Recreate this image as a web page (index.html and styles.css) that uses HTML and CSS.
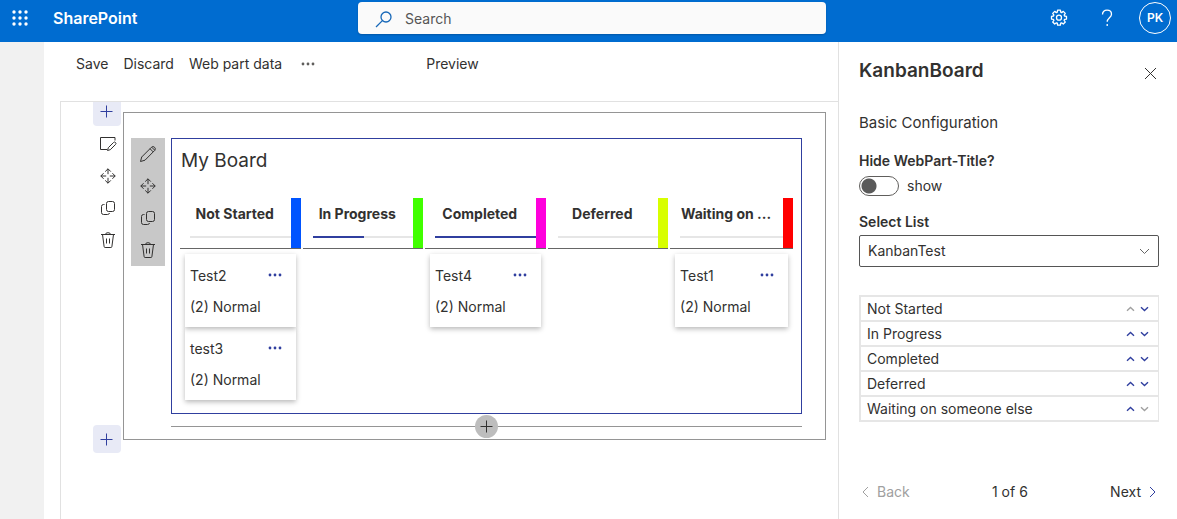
FILE: index.html
```html
<!DOCTYPE html>
<html lang="en">
<head>
<meta charset="utf-8">
<meta name="viewport" content="width=device-width, initial-scale=1">
<title>SharePoint - KanbanBoard</title>
<link rel="stylesheet" href="styles.css">
</head>
<body>
<svg class="sprite" aria-hidden="true">
  <symbol id="plus" viewBox="0 0 13 13"><path d="M6.500 .5v12M.5 6.500h12"/></symbol>
  <symbol id="move" viewBox="0 0 16 16"><path d="M8 .8v5.400M8 9.800v5.400M.8 8h5.400M9.800 8h5.400M5.200 3.600 8 .8l2.800 2.800M5.200 12.400 8 15.200l2.800-2.800M3.600 5.200.8 8l2.800 2.800M12.400 5.200 15.200 8l-2.800 2.800"/></symbol>
  <symbol id="copy" viewBox="0 0 16 16"><rect x="6.500" y="1.500" width="8" height="10" rx="2"/><path d="M4.500 4.500h-1a2 2 0 0 0-2 2v6a2 2 0 0 0 2 2h4a2 2 0 0 0 2-1.500"/></symbol>
  <symbol id="trash" viewBox="0 0 16 16"><path d="M1 2.500h14M5.500 2.500a2.500 1.800 0 0 1 5 0M2.500 2.500l1.600 12q.1 1 1 1h5.800q.9 0 1-1l1.600-12M6.500 6.500v5M9.500 6.500v5"/></symbol>
  <symbol id="pencil" viewBox="0 0 18 18"><path d="M1.500 16.500 2.700 12 12.400 2.300a2.200 2.200 0 0 1 3.200 3.200L6 15.200ZM11 3.700 14.200 6.900M12.800 2.300l3 3"/></symbol>
  <symbol id="edit-section" viewBox="0 0 18 16"><path d="M16 4.500V1.500H1.500v12H8M8.500 14.500l.8-2.800 5.200-5.200a1.400 1.400 0 0 1 2 2l-5.200 5.200Z"/></symbol>
  <symbol id="dots" viewBox="0 0 14 4"><circle cx="2" cy="2" r="1.400"/><circle cx="7" cy="2" r="1.400"/><circle cx="12" cy="2" r="1.400"/></symbol>
  <symbol id="up" viewBox="0 0 9 6"><path d="M1 4.800 4.500 1.500 8 4.800"/></symbol>
  <symbol id="down" viewBox="0 0 9 6"><path d="M1 1.200 4.500 4.500 8 1.200"/></symbol>
</svg>

<header class="suite-bar">
  <div class="suite-brand">
    <button class="launcher" aria-label="App launcher">
      <svg width="16" height="16" viewBox="0 0 16 16"><circle cx="2" cy="2" r="1.700"/><circle cx="8" cy="2" r="1.700"/><circle cx="14" cy="2" r="1.700"/><circle cx="2" cy="8" r="1.700"/><circle cx="8" cy="8" r="1.700"/><circle cx="14" cy="8" r="1.700"/><circle cx="2" cy="14" r="1.700"/><circle cx="8" cy="14" r="1.700"/><circle cx="14" cy="14" r="1.700"/></svg>
    </button>
    <a class="brand" href="#">SharePoint</a>
  </div>
  <label class="search">
    <svg class="line search-icon" width="17" height="17" viewBox="0 0 17 17"><circle cx="11" cy="6" r="5"/><path d="M7.400 9.600 1 16"/></svg>
    <input class="search-input" type="search" placeholder="Search" aria-label="Search">
  </label>
  <div class="suite-actions">
    <button class="suite-button" aria-label="Settings">
      <svg class="line gear" width="18" height="18" viewBox="0 0 18 18"><path d="M7.600 1.200h2.800l.3 2 .9.400 1.700-1.200 2 2-1.200 1.700.4.900 2 .3v2.800l-2 .3-.4.900 1.200 1.700-2 2-1.700-1.200-.9.400-.3 2H7.600l-.3-2-.9-.4-1.700 1.200-2-2 1.200-1.700-.4-.9-2-.3V7.300l2-.3.400-.9-1.200-1.700 2-2 1.700 1.200.9-.4Z"/><circle cx="9" cy="8.700" r="2.500"/></svg>
    </button>
    <button class="suite-button" aria-label="Help">
      <svg class="line help" width="12" height="18" viewBox="0 0 12 18"><path d="M1.500 5.500C1.500 2.700 3.400 1.200 6 1.200s4.500 1.600 4.500 4c0 3.300-4.300 3.800-4.300 7.600M6.200 15v2"/></svg>
    </button>
    <button class="avatar" aria-label="Account">PK</button>
  </div>
</header>

<div class="workspace">
  <nav class="rail" aria-label="App bar"></nav>

  <main class="editor">
    <div class="commands">
      <button class="command">Save</button>
      <button class="command">Discard</button>
      <button class="command">Web part data</button>
      <button class="command more" aria-label="More"><svg width="14" height="4"><use href="#dots"/></svg></button>
      <button class="command preview">Preview</button>
    </div>

    <div class="canvas">
      <div class="section-tools">
        <button class="add-section add-top" aria-label="Add section above"><svg class="line" width="13" height="13"><use href="#plus"/></svg></button>
        <div class="tool-list">
          <button class="tool" aria-label="Edit section"><svg class="line" width="18" height="16"><use href="#edit-section"/></svg></button>
          <button class="tool" aria-label="Move section"><svg class="line" width="16" height="16"><use href="#move"/></svg></button>
          <button class="tool" aria-label="Duplicate section"><svg class="line" width="16" height="16"><use href="#copy"/></svg></button>
          <button class="tool" aria-label="Delete section"><svg class="line" width="16" height="16"><use href="#trash"/></svg></button>
        </div>
        <button class="add-section add-bottom" aria-label="Add section below"><svg class="line" width="13" height="13"><use href="#plus"/></svg></button>
      </div>

      <section class="section">
        <div class="webpart-tools">
          <button class="tool" aria-label="Edit web part"><svg class="line" width="18" height="18"><use href="#pencil"/></svg></button>
          <button class="tool" aria-label="Move web part"><svg class="line" width="16" height="16"><use href="#move"/></svg></button>
          <button class="tool" aria-label="Duplicate web part"><svg class="line" width="16" height="16"><use href="#copy"/></svg></button>
          <button class="tool" aria-label="Delete web part"><svg class="line" width="16" height="16"><use href="#trash"/></svg></button>
        </div>
        <div class="section-body">
          <article class="webpart">
            <h2 class="board-title">My Board</h2>
            <div class="board">
              <div class="column">
                <div class="column-head blue"><h3 class="column-title">Not Started</h3><div class="progress"></div></div>
                <div class="cards">
                  <div class="card"><div class="card-top"><span>Test2</span><button class="card-menu" aria-label="Test2 menu"><svg width="14" height="4"><use href="#dots"/></svg></button></div><div class="card-text">(2) Normal</div></div>
                  <div class="card"><div class="card-top"><span>test3</span><button class="card-menu" aria-label="test3 menu"><svg width="14" height="4"><use href="#dots"/></svg></button></div><div class="card-text">(2) Normal</div></div>
                </div>
              </div>
              <div class="column">
                <div class="column-head green"><h3 class="column-title">In Progress</h3><div class="progress"><div class="progress-fill" style="width:51%"></div></div></div>
              </div>
              <div class="column">
                <div class="column-head pink"><h3 class="column-title">Completed</h3><div class="progress"><div class="progress-fill" style="width:100%"></div></div></div>
                <div class="cards">
                  <div class="card"><div class="card-top"><span>Test4</span><button class="card-menu" aria-label="Test4 menu"><svg width="14" height="4"><use href="#dots"/></svg></button></div><div class="card-text">(2) Normal</div></div>
                </div>
              </div>
              <div class="column">
                <div class="column-head lime"><h3 class="column-title">Deferred</h3><div class="progress"></div></div>
              </div>
              <div class="column">
                <div class="column-head red"><h3 class="column-title">Waiting on ...</h3><div class="progress"></div></div>
                <div class="cards">
                  <div class="card"><div class="card-top"><span>Test1</span><button class="card-menu" aria-label="Test1 menu"><svg width="14" height="4"><use href="#dots"/></svg></button></div><div class="card-text">(2) Normal</div></div>
                </div>
              </div>
            </div>
          </article>
          <div class="insert">
            <button class="insert-button" aria-label="Add web part"><svg class="line" width="13" height="13"><use href="#plus"/></svg></button>
          </div>
        </div>
      </section>
    </div>
  </main>

  <aside class="panel">
    <div class="panel-head">
      <h1 class="panel-title">KanbanBoard</h1>
      <button class="close" aria-label="Close"><svg class="line" width="13" height="13" viewBox="0 0 13 13"><path d="M1 1l11 11M12 1 1 12"/></svg></button>
    </div>
    <h2 class="panel-subtitle">Basic Configuration</h2>
    <label class="field-label" for="hide-title">Hide WebPart-Title?</label>
    <div class="toggle-row">
      <input class="toggle" type="checkbox" role="switch" id="hide-title">
      <span>show</span>
    </div>
    <label class="field-label" for="list">Select List</label>
    <div class="select-wrap">
      <select class="select" id="list"><option>KanbanTest</option></select>
      <svg class="line select-arrow" width="11" height="7" viewBox="0 0 11 7"><path d="M1 1l4.500 4.500L10 1"/></svg>
    </div>
    <ul class="order">
      <li class="order-row"><span class="order-name">Not Started</span><button class="shift" disabled aria-label="Move up"><svg class="line" width="9" height="6"><use href="#up"/></svg></button><button class="shift" aria-label="Move down"><svg class="line" width="9" height="6"><use href="#down"/></svg></button></li>
      <li class="order-row"><span class="order-name">In Progress</span><button class="shift" aria-label="Move up"><svg class="line" width="9" height="6"><use href="#up"/></svg></button><button class="shift" aria-label="Move down"><svg class="line" width="9" height="6"><use href="#down"/></svg></button></li>
      <li class="order-row"><span class="order-name">Completed</span><button class="shift" aria-label="Move up"><svg class="line" width="9" height="6"><use href="#up"/></svg></button><button class="shift" aria-label="Move down"><svg class="line" width="9" height="6"><use href="#down"/></svg></button></li>
      <li class="order-row"><span class="order-name">Deferred</span><button class="shift" aria-label="Move up"><svg class="line" width="9" height="6"><use href="#up"/></svg></button><button class="shift" aria-label="Move down"><svg class="line" width="9" height="6"><use href="#down"/></svg></button></li>
      <li class="order-row"><span class="order-name">Waiting on someone else</span><button class="shift" aria-label="Move up"><svg class="line" width="9" height="6"><use href="#up"/></svg></button><button class="shift" disabled aria-label="Move down"><svg class="line" width="9" height="6"><use href="#down"/></svg></button></li>
    </ul>
    <div class="pager">
      <button class="page-button" disabled><svg class="line" width="7" height="12" viewBox="0 0 7 12"><path d="M6 1 1 6l5 5"/></svg>Back</button>
      <span>1 of 6</span>
      <button class="page-button next">Next<svg class="line" width="7" height="12" viewBox="0 0 7 12"><path d="M1 1l5 5-5 5"/></svg></button>
    </div>
  </aside>
</div>
</body>
</html>
```
FILE: styles.css
```css
* {
  box-sizing: border-box;
}

body {
  margin: 0;
  min-height: 100vh;
  display: flex;
  flex-direction: column;
  background: #fff;
  color: #323130;
  font: 14px/20px Inter, "Liberation Sans", sans-serif;
}

h1, h2, h3, ul {
  margin: 0;
  padding: 0;
  list-style: none;
}

button {
  display: flex;
  align-items: center;
  justify-content: center;
  padding: 0;
  border: 0;
  background: none;
  color: inherit;
  font: inherit;
}

svg {
  display: block;
  flex: none;
  fill: currentColor;
}

.line {
  fill: none;
  stroke: currentColor;
}

.sprite {
  position: absolute;
  width: 0;
  height: 0;
}

/* Suite bar */
.suite-bar {
  display: flex;
  align-items: center;
  padding: 2px 6px 8px 0;
  background: #006cd0;
  color: #fff;
}

.suite-brand {
  display: flex;
  align-items: center;
  flex: 0 0 358px;
}

.launcher {
  width: 40px;
  height: 32px;
}

.brand {
  margin-left: 13px;
  color: #fff;
  font-size: 16px;
  font-weight: 600;
  text-decoration: none;
}

.search {
  display: flex;
  align-items: center;
  gap: 13px;
  flex: 0 1 468px;
  height: 32px;
  padding: 2px 0 0 17px;
  border-radius: 4px;
  background: #fafafa;
  box-shadow: 0 1px 2px rgba(0, 0, 0, .2);
}

.search-icon {
  color: #1768b8;
  stroke-width: 1.3;
}

.search-input {
  flex: 1;
  min-width: 0;
  padding: 0;
  border: 0;
  outline: 0;
  background: none;
  font: inherit;
}

.search-input::placeholder {
  color: #555;
  opacity: 1;
}

.suite-actions {
  display: flex;
  align-items: center;
  margin-left: auto;
}

.suite-button {
  width: 48px;
  height: 32px;
}

.gear,
.help {
  stroke-linejoin: round;
  stroke-width: 1.3;
}

.avatar {
  width: 32px;
  height: 32px;
  margin-left: 8px;
  border: 1px solid #fff;
  border-radius: 50%;
  font-size: 12px;
  font-weight: 600;
}

/* Page frame */
.workspace {
  display: flex;
  flex: 1;
}

.rail {
  flex: 0 0 44px;
  background: #f1f1f1;
}

.editor {
  display: flex;
  flex-direction: column;
  flex: 1;
  min-width: 0;
  padding-left: 16px;
}

.commands {
  display: flex;
  gap: 15px;
  padding: 12px 16px 27px;
}

.more {
  margin-left: 4px;
  color: #605e5c;
}

.preview {
  margin-left: 96px;
}

.canvas {
  display: grid;
  grid-template-columns: 28px minmax(0, 1fr);
  align-content: start;
  flex: 1;
  gap: 2px;
  padding: 0 12px 0 32px;
  border: solid #e1e1e1;
  border-width: 1px 0 0 1px;
}

/* Section tools */
.section-tools {
  display: flex;
  flex-direction: column;
}

.add-section {
  height: 28px;
  padding-right: 1px;
  border-radius: 4px;
  background: #e8eaf6;
  color: #303f9f;
}

.add-top {
  height: 24px;
  padding-bottom: 5px;
  border-radius: 0 0 4px 4px;
}

.add-bottom {
  margin-top: auto;
}

.tool-list {
  padding: 2px 0 0 1px;
}

.tool {
  width: 100%;
  height: 32px;
}

/* Section and web part */
.section {
  display: flex;
  align-items: flex-start;
  min-width: 0;
  gap: 6px;
  margin: 10px 0 13px;
  padding: 25px 23px 0 7px;
  border: 1px solid #959595;
}

.webpart-tools {
  flex: 0 0 34px;
  background: #c8c8c8;
}

.section-body {
  flex: 1;
  min-width: 0;
}

.webpart {
  padding: 7px 8px 13px;
  border: 1px solid #303f9f;
}

.board-title {
  padding: 3px 1px 25px;
  font-size: 19px;
  font-weight: 400;
  line-height: 24px;
}

.board {
  display: grid;
  grid-template-columns: repeat(4, minmax(0, 98fr)) minmax(0, 100fr);
  gap: 2px;
}

.column-head {
  display: flex;
  flex-direction: column;
  height: 51px;
  padding: 6px 0 10px 10px;
  border-bottom: 1px solid #666;
  background: linear-gradient(var(--tag), var(--tag)) right / 10px 100% no-repeat;
}

.blue { --tag: #0054ff; }
.green { --tag: #40ff00; }
.pink { --tag: #ff00dc; }
.lime { --tag: #d8ff00; }
.red { --tag: #ff0000; }

.column-title {
  margin-right: 21px;
  overflow: hidden;
  font-size: 14px;
  font-weight: 700;
  text-align: center;
  white-space: nowrap;
}

.progress {
  height: 2px;
  margin: auto 10px 0 0;
  background: #e6e6e6;
}

.progress-fill {
  height: 100%;
  background: #303f9f;
}

.cards {
  display: flex;
  flex-direction: column;
  padding: 5px 5px 0;
}

.card {
  padding: 7px 5px 8px;
  background: #fff;
  box-shadow: 0 2px 5px rgba(0, 0, 0, .28);
}

/* The first card casts its shadow over the next one */
.card:first-child {
  z-index: 1;
}

.card-top {
  display: flex;
  justify-content: space-between;
  height: 26px;
  padding-top: 5px;
}

.card-menu {
  width: 32px;
  height: 18px;
  color: #303f9f;
}

.card-text {
  padding-top: 7px;
  line-height: 25px;
}

.insert {
  display: flex;
  justify-content: center;
  height: 25px;
  padding-top: 1px;
  background: linear-gradient(#959595, #959595) 0 12px / 100% 1px no-repeat;
}

.insert-button {
  width: 23px;
  height: 23px;
  border-radius: 50%;
  background: #bdbdbd;
}

/* Property pane */
.panel {
  flex: 0 0 339px;
  padding: 14px 18px 16px 20px;
  border-left: 1px solid #e1e1e1;
}

.panel-head {
  display: flex;
  justify-content: space-between;
}

.panel-title {
  font-size: 19px;
  font-weight: 600;
  line-height: 30px;
}

.close {
  width: 18px;
  height: 34px;
}

.panel-subtitle {
  padding: 23px 0 18px;
  font-size: 15px;
  font-weight: 400;
}

.field-label {
  display: block;
  font-weight: 600;
}

.toggle-row {
  display: flex;
  align-items: center;
  gap: 8px;
  padding: 5px 0 16px;
}

.toggle {
  appearance: none;
  width: 40px;
  height: 20px;
  margin: 0;
  border: 1px solid #605e5c;
  border-radius: 10px;
  background: radial-gradient(circle at 9px 9px, #5a5a5a 7px, transparent 8px);
}

.select-wrap {
  position: relative;
  margin-top: 3px;
}

.select {
  appearance: none;
  display: block;
  width: 100%;
  height: 32px;
  padding: 0 32px 0 8px;
  border: 1px solid #555;
  border-radius: 2px;
  background: #fff;
  color: inherit;
  font: inherit;
}

.select-arrow {
  position: absolute;
  top: 13px;
  right: 9px;
  color: #666;
}

.order {
  margin-top: 28px;
  border: solid #e6e6e6;
  border-width: 0 1px 2px 2px;
}

.order-row {
  display: flex;
  align-items: center;
  height: 25px;
  padding: 0 7px 0 6px;
  border-top: 2px solid #e6e6e6;
}

.order-name {
  flex: 1;
}

.shift {
  width: 14px;
  height: 20px;
  color: #303f9f;
}

.shift .line {
  stroke-width: 1.4;
}

.shift:disabled {
  color: #a0a0a0;
}

.pager {
  display: flex;
  align-items: center;
  justify-content: space-between;
  padding: 60px 3px 0;
}

.page-button {
  gap: 8px;
}

.page-button:disabled {
  color: #a0a0a0;
}

.next .line {
  color: #303f9f;
}
```
